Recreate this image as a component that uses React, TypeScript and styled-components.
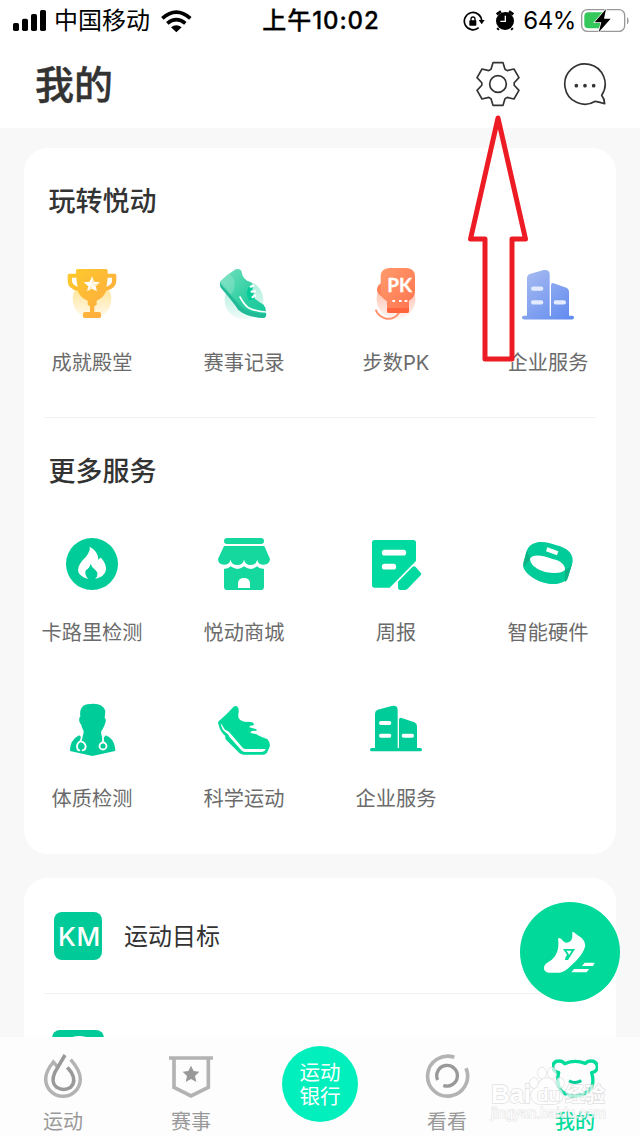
import React from "react";
import styled, { createGlobalStyle } from "styled-components";

const Global = createGlobalStyle`
  * { box-sizing: border-box; }
  body { margin: 0; background: #f8f8f8; }
`;

const Screen = styled.div`
  position: relative;
  display: flex;
  flex-direction: column;
  width: 640px;
  height: 1136px;
  overflow: hidden;
  background: #f8f8f8;
  color: #333;
  font-family: Inter, "Noto Sans CJK SC", sans-serif;
`;

const StatusBar = styled.div`
  flex: none;
  display: grid;
  grid-template-columns: 1fr auto 1fr;
  align-items: center;
  height: 40px;
  padding: 0 11px 0 13px;
  background: #fff;
  color: #000;
  font-size: 24px;
  line-height: 40px;
`;

const StatusGroup = styled.div<{ $end?: boolean }>`
  display: flex;
  align-items: center;
  justify-content: ${(p) => (p.$end ? "flex-end" : "flex-start")};
`;

const Carrier = styled.span`
  margin: 0 11px 0 7px;
  padding-top: 1px;
`;

const Clock = styled.span`
  padding-top: 1px;
  font-weight: 500;
  letter-spacing: 0.9px;
  -webkit-text-stroke: 0.3px #000;
`;

const AlarmSlot = styled.span`
  display: flex;
  margin: 0 -2px 0 10px;
`;

const Percent = styled.span`
  margin: 0 5px 0 10px;
  padding-top: 1px;
  font-size: 24px;
  letter-spacing: -0.4px;
`;

const Header = styled.header`
  flex: none;
  display: flex;
  align-items: center;
  height: 88px;
  padding: 0 31px 0 35px;
  background: #fff;
`;

const PageTitle = styled.h1`
  flex: 1;
  margin: 0;
  padding-top: 2px;
  font-size: 39px;
  line-height: 56px;
  font-weight: 500;
  -webkit-text-stroke: 0.4px #333;
`;

const HeaderActions = styled.div`
  display: flex;
  gap: 42px;
`;

const Content = styled.main`
  flex: 1;
  min-height: 0;
  overflow: hidden;
  display: flex;
  flex-direction: column;
  gap: 24px;
  padding: 20px 24px 0;
`;

const Card = styled.section<{ $height?: number }>`
  flex: none;
  height: ${(p) => (p.$height ? `${p.$height}px` : "auto")};
  background: #fff;
  border-radius: 24px;
`;

const SectionTitle = styled.h2<{ $top: number }>`
  margin: 0;
  padding: ${(p) => p.$top}px 0 40px 24.5px;
  font-size: 27px;
  line-height: 40px;
  font-weight: 500;
`;

const Grid = styled.div<{ $bottom: number }>`
  display: grid;
  grid-template-columns: repeat(4, 152px);
  row-gap: 51px;
  margin: 0 -8px;
  padding-bottom: ${(p) => p.$bottom}px;
`;

const Item = styled.div`
  display: flex;
  flex-direction: column;
  align-items: center;
  gap: 23px;
`;

const ItemLabel = styled.span`
  font-size: 20.2px;
  line-height: 28px;
  font-weight: 400;
  color: #6b6b6b;
  white-space: nowrap;
`;

const Divider = styled.hr`
  height: 1px;
  margin: 0 20px;
  border: 0;
  background: #f3f3f3;
`;

const ListRow = styled.div<{ $inset: number; $shift?: number }>`
  display: flex;
  align-items: center;
  gap: 22px;
  height: 115px;
  padding-left: ${(p) => p.$inset}px;
  padding-top: ${(p) => p.$shift ?? 0}px;
`;

const RowLabel = styled.span`
  padding-top: 2px;
  font-size: 24px;
  line-height: 34px;
`;

const Badge = styled.div<{ $size: number }>`
  display: flex;
  justify-content: center;
  align-items: center;
  width: ${(p) => p.$size}px;
  height: ${(p) => p.$size}px;
  padding: 2px 0 0 3px;
  border-radius: 8px;
  background: #00cb98;
  color: #fff;
  font-size: 26px;
  font-weight: 500;
  letter-spacing: 0.8px;
`;

const TabBar = styled.nav`
  flex: none;
  display: grid;
  grid-template-columns: repeat(5, 128px);
  height: 99px;
  background: #fdfdfd;
`;

const Tab = styled.div<{ $active?: boolean }>`
  display: flex;
  flex-direction: column;
  align-items: center;
  gap: 8px;
  padding: 13px 2px 0 0;
  color: ${(p) => (p.$active ? "#00dc9c" : "#999")};
  font-size: 20px;
  line-height: 28px;
  font-weight: ${(p) => (p.$active ? 500 : 400)};
`;

const BankButton = styled.div`
  display: flex;
  align-items: center;
  justify-content: center;
  justify-self: center;
  width: 76px;
  height: 76px;
  margin-top: 9px;
  padding-top: 1px;
  border-radius: 50%;
  background: #00efbc;
  color: #fff;
  font-size: 20.5px;
  line-height: 24px;
  text-align: center;
`;

const FloatButton = styled.div`
  position: absolute;
  left: 520px;
  top: 902px;
  width: 100px;
  height: 100px;
  border-radius: 50%;
  background: #00d999;
`;

const Pointer = styled.svg`
  position: absolute;
  left: 460px;
  top: 110px;
`;

const Watermark = styled.svg`
  position: absolute;
  left: 486px;
  top: 1058px;
`;

/* Icons are drawn on a grid of three units per pixel. */
const Glyph = ({ x, y, w = 192, h = 192, children }: { x: number; y: number; w?: number; h?: number; children: React.ReactNode }) => (
  <svg width={w / 3} height={h / 3} viewBox={`${x} ${y} ${w} ${h}`} fill="none" display="block">
    {children}
  </svg>
);

const Trophy = () => (
  <Glyph x={60} y={36}>
    <defs>
      <linearGradient id="gold" x1="0" y1="0" x2="1" y2="1"><stop offset="0" stopColor="#fdcb2b" /><stop offset="1" stopColor="#ffa643" /></linearGradient>
      <linearGradient id="goldHalo" x1="0" y1="0" x2="0" y2="1"><stop offset="0" stopColor="#ffdf80" /><stop offset="1" stopColor="#fffaf0" /></linearGradient>
    </defs>
    <circle cx="156" cy="148" r="58" fill="url(#goldHalo)" />
    <path d="M95 82h16l8 30q-24-2-24-20zM216 82h-16l-8 30q24-2 24-20z" fill="#fff" />
    <path fillRule="evenodd" d="M113 57h85q5 0 5 5v9h21q5 0 5 5v16q0 23-30 30-8 20-29 30v12l-7 5v17h14q6 0 6 6v7q0 5-5 5h-45q-4 0-4-5v-7q0-6 6-6h15v-17l-7-5v-12q-23-10-30-30-30-5-30-30V76q0-5 5-5h20v-9q0-5 5-5zM96 83v10q0 11 17 17-3-12-4-27zm107 0q-1 15-4 27 17-6 17-17V83z" fill="url(#gold)" />
    <path d="m156 79 7 16 17 2-13 12 4 15-15-8-15 8 4-15-14-12 18-2z" fill="#fff" />
    <path d="m156 79 7 16-7 10zm24 18-13 12-11-4zm-24 8v11l-15 8z" fill="#ffdc80" opacity=".5" />
  </Glyph>
);

const RaceShoe = () => (
  <Glyph x={516} y={36}>
    <defs>
      <linearGradient id="mint" x1="0" y1="0" x2="1" y2="1"><stop offset="0" stopColor="#77e0c0" /><stop offset=".55" stopColor="#30cfa2" /><stop offset="1" stopColor="#12c79a" /></linearGradient>
      <linearGradient id="mintHalo" x1="0" y1="0" x2="0" y2="1"><stop offset="0" stopColor="#a8edda" /><stop offset="1" stopColor="#effbf8" /></linearGradient>
    </defs>
    <circle cx="612" cy="150" r="58" fill="url(#mintHalo)" />
    <path d="M541 94q22-22 46-36 12-4 17 4 3 27 27 34l8 8-6 12 10 12-6 12q20 17 34 24 10 12 7 35-3 5-10 5-38-4-60-20-8-3-13-12-24-33-51-64-7-7-3-14z" fill="url(#mint)" />
    <path d="M567 71q19 14 17 35-1 19-12 27l-31-39z" fill="#9ae8d0" opacity=".4" />
    <path d="M541 99q2 5 6 9 33 36 53 59 15 20 78 27 0 7-5 9-49 1-78-23-13-21-52-66-5-6-2-15z" fill="#22b997" />
    <path d="M600 141q13 24 25 32 24 12 54 13" stroke="#fff" strokeWidth="5" strokeLinecap="round" />
    <path d="M631 103q-18 23-5 47h15l4-7-9-14 3-20z" fill="#00cc99" />
    <path d="m632 110 8-3m-5 18 10-1m-7 17 7-4" stroke="#fff" strokeWidth="7" strokeLinecap="round" />
  </Glyph>
);

const BoxingGlove = () => (
  <Glyph x={42} y={36}>
    <defs>
      <linearGradient id="coral" x1="0" y1="0" x2="1" y2="1"><stop offset="0" stopColor="#ff9b6a" /><stop offset="1" stopColor="#ff7250" /></linearGradient>
      <linearGradient id="coralHalo" x1="0" y1="0" x2="0" y2="1"><stop offset="0" stopColor="#ffae96" /><stop offset="1" stopColor="#fff5f2" /></linearGradient>
    </defs>
    <circle cx="138" cy="148" r="58" fill="url(#coralHalo)" />
    <path d="M78 181q7 18 31 25 25 3 38-18" stroke="#ff936f" strokeWidth="6" strokeLinecap="round" />
    <path d="M94 100q-11 5-13 18-1 7 5 14l27 24 12-12V98z" fill="#ff8155" />
    <path d="M117 54h53q25 2 25 25v46q-1 18-18 27v31q0 6-6 6h-54q-6 0-6-6v-30q-19-10-19-32V79q0-23 25-25z" fill="url(#coral)" />
    <path d="M111 174h66v9q0 6-6 6h-54q-6 0-6-6z" fill="#ff653d" />
    <path d="M127 153h8m12 0h8m9 0h8" stroke="#fff" strokeWidth="6" />
    <text x="112" y="125" fontFamily="Lato, sans-serif" fontWeight="700" fontSize="56" textLength="74" lengthAdjust="spacingAndGlyphs" fill="#fff" stroke="#fff" strokeWidth="1">PK</text>
  </Glyph>
);

const Buildings = ({ blue }: { blue?: boolean }) => {
  const fill = blue ? "url(#sky)" : "#00cc99";
  const pane = blue ? "#e2ebff" : "#fff";
  return (
    <Glyph x={72} y={blue ? 36 : 24}>
      <defs>
        <linearGradient id="sky" gradientUnits="userSpaceOnUse" x1="105" y1="50" x2="220" y2="190"><stop offset="0" stopColor="#a6baf0" /><stop offset="1" stopColor="#638cf0" /></linearGradient>
      </defs>
      <g transform={blue ? "translate(0 8) scale(1 1.088)" : undefined}>
        <path d="M95 174h10V71q0-9 8-12l42-11q18-3 18 12v114h4V90q0-8 8-6l38 13q8 3 8 12v65h10q5 0 5 5t-5 5H95q-5 0-5-5t5-5z" fill={fill} />
        <path d="M123 99h25m-25 38h25m43 0h25" stroke={pane} strokeWidth="12" strokeLinecap="round" />
      </g>
    </Glyph>
  );
};

const Calories = () => (
  <Glyph x={60} y={36}>
    <circle cx="156" cy="132" r="78" fill="#00cc99" />
    <path d="M149 80q3 12-11 30-25 24-24 41 1 18 31 26-14-15-7-27 11-6 14-19 3 12 14 19 14 12-1 27 29-7 33-27 2-18-15-37-5 1-8 7 1-26-26-40z" fill="#fff" />
  </Glyph>
);

const Shop = () => (
  <Glyph x={516} y={36}>
    <g fill="#15d89f">
      <rect x="552" y="54" width="120" height="18" rx="9" />
      <path d="M552 78h121l17 39q-1 17-19 17-17 0-19-15-4 16-20 16t-20-16q-3 16-20 16-18 0-20-16-4 15-20 15-18 0-18-17z" />
      <path fillRule="evenodd" d="M552 146q11 2 20-7 21 16 40 0 20 16 39 0 9 9 21 7v54q0 10-10 10H562q-10 0-10-10zm42 58h36v-14q-1-16-18-16t-18 16z" />
    </g>
  </Glyph>
);

const Report = () => (
  <Glyph x={42} y={36}>
    <path d="M74 60h116q8 0 8 8v55l-79 80H74q-8 0-8-8V68q0-8 8-8z" fill="#00d9a0" />
    <path d="m187 141q5-5 10 0l15 17q4 4 0 8l-39 40q-4 4-9 4h-13q-7 0-7-7v-18z" fill="#00d9a0" />
    <path d="M104 98h56m-56 42h26" stroke="#fff" strokeWidth="17" strokeLinecap="round" />
  </Glyph>
);

const Band = () => (
  <Glyph x={498} y={36}>
    <path fillRule="evenodd" d="M530 93C540 66 570 62 600 70l30 9c30 10 42 30 37 51l-11 35c-6 23-31 30-61 26-35-5-65-26-74-46-3-7-1-15 0-19zM540 116c2 40 88 54 105 34 2-14-14-29-37-33-24-8-58-18-68-1z" fill="#00cc99" />
    <path d="m530 93-9 33q-1 7 0 15l19-22q0-12-10-26zM667 130q-7 17-22 19v37q8-5 11-21z" fill="#09b185" />
    <path d="m592 82 33 12-4 12-33-12z" fill="#fff" />
  </Glyph>
);

const Doctor = () => (
  <Glyph x={60} y={24}>
    <path d="M151 42q37-4 45 21l-2 20q5 3 3 12l-4 12q-5 11-10 18l2 13q5 10 12-2 26 9 29 42l-1 5-68 15-67-15q-1-32 27-47 13 13 14-13-5-8-8-20-7-7-5-20l3-3q-5-38 30-38z" fill="#00cc99" />
    <path d="M125 133q1 13-3 20-11 6-11 17 1 11 7 11m4-27q14 3 15 16-1 10-9 11M189 128v27" stroke="#fff" strokeWidth="5.5" strokeLinecap="round" />
    <circle cx="189" cy="168" r="10.5" stroke="#fff" strokeWidth="5.5" />
  </Glyph>
);

const SportShoe = () => (
  <Glyph x={516} y={24}>
    <path d="M536 94q24-21 45-44 7-5 12 1 5 8 2 22-3 17 18 22l20 1q11 2 8 10l-11 1-2 5 19 5q4 1 3 5l-15 1-4 6 17 3 9 5q15 7 25 10 10 12 7 23l-8 18q-5 6-12 6h-59q-7-1-12-5l-40-40q-3-5-2-11-16-14-20-33-3-7 0-11z" fill="#00d999" />
    <path d="m542 99 13 20q12 4 15 10l38 44q4 4 9 4h61q-5 9-12 9h-51q-6 0-11-5l-36-41q-2-8-10-12-14-9-16-29z" fill="#fff" />
  </Glyph>
);

const TOOTH = [[-21, -44], [-15, -64], [15, -64], [21, -44]];
const gearPoints = [0, 60, 120, 180, 240, 300]
  .flatMap((deg) => {
    const a = (deg * Math.PI) / 180;
    return TOOTH.map(([x, y]) => `${(534 + x * Math.cos(a) - y * Math.sin(a)).toFixed(1)},${(252 + x * Math.sin(a) + y * Math.cos(a)).toFixed(1)}`);
  })
  .join(" ");

const Gear = () => (
  <Glyph x={465} y={183} w={138} h={138}>
    <g stroke="#333" strokeWidth="5" strokeLinejoin="round">
      <polygon points={gearPoints} />
      <circle cx="534" cy="252" r="25" />
    </g>
  </Glyph>
);

const Chat = () => (
  <Glyph x={729} y={183} w={138} h={138}>
    <path d="M845 286A60.5 60.5 0 1 0 826 304q14 2 28 7-1-16-9-25z" stroke="#333" strokeWidth="5" strokeLinejoin="round" />
    <g fill="#333"><circle cx="769" cy="257" r="5.5" /><circle cx="795" cy="257" r="5.5" /><circle cx="821" cy="257" r="5.5" /></g>
  </Glyph>
);

const Signal = () => (
  <Glyph x={39} y={24} w={102} h={72}>
    <g fill="#000"><rect x="39" y="66" width="18" height="24" rx="5" /><rect x="66" y="53" width="18" height="37" rx="5" /><rect x="93" y="39" width="18" height="51" rx="5" /><rect x="120" y="27" width="18" height="63" rx="5" /></g>
  </Glyph>
);

const Wifi = () => (
  <Glyph x={484} y={24} w={93} h={72}>
    <path d="M488 52q42-37 84 0M503 67q27-22 54 0" stroke="#000" strokeWidth="11" />
    <path d="M514 79q16-12 32 0l-16 15z" fill="#000" />
  </Glyph>
);

const RotationLock = () => (
  <Glyph x={430} y={27} w={66} h={66}>
    <path d="M477 80a26 26 0 1 1 9-20" stroke="#000" strokeWidth="5" />
    <path d="M477 57h18l-9 13z" fill="#000" />
    <rect x="449" y="58" width="21" height="16" rx="2" fill="#000" />
    <path d="M454 60v-6q0-6 6-6t6 6v6" stroke="#000" strokeWidth="4" />
  </Glyph>
);

const Alarm = () => (
  <Glyph x={525} y={27} w={60} h={63}>
    <circle cx="555" cy="60" r="27" fill="#000" />
    <path d="m530 40 13-9m24 0 13 9M536 82l-4 4m42-4 4 4" stroke="#000" strokeWidth="8" />
    <path d="M556 44v17h-15" stroke="#fff" strokeWidth="4" />
  </Glyph>
);

const Battery = () => (
  <Glyph x={783} y={21} w={144} h={75}>
    <rect x="785" y="26" width="129" height="65" rx="17" stroke="#999" strokeWidth="4" />
    <path d="M805 34h46l-13 48h-33q-12 0-12-12V46q0-12 12-12z" fill="#34c759" />
    <path d="M921 48q5 4 5 11t-5 11z" fill="#999" />
    <path d="m858 24-34 40h20l-8 30 36-41h-20z" fill="#000" stroke="#fff" strokeWidth="4" paintOrder="stroke" />
  </Glyph>
);

const FlameTab = () => (
  <Glyph x={120} y={60} w={138} h={150}>
    <g strokeWidth="10.5">
      <path d="M172 110 160 96q-23 28-23 51a52 52 0 0 0 104 0q0-25-29-58" stroke="#b3b3b3" />
      <path d="m195 75-30 51q-14 31 5 46 21 13 42 0 18-18 2-45l-12-15" stroke="#999" />
    </g>
  </Glyph>
);

const ShieldTab = () => (
  <Glyph x={504} y={60} w={138} h={150}>
    <path d="M507 84h132M522 86v86l51 26 52-26V86" stroke="#b3b3b3" strokeWidth="11" />
    <path d="m573 107 8 16 17 2-13 13 4 18-16-9-16 9 4-18-13-13 17-2z" fill="#999" />
  </Glyph>
);

const SwirlTab = () => (
  <Glyph x={312} y={60} w={138} h={150}>
    <path d="M403 82A60 60 0 1 0 438 115" stroke="#b3b3b3" strokeWidth="11" />
    <path d="M353 150a31 31 0 1 1 17 16" stroke="#999" strokeWidth="10" />
  </Glyph>
);

const BearTab = () => (
  <Glyph x={696} y={60} w={138} h={150}>
    <path d="M716 128q-18-5-18-17 1-17 18-18 11-1 18 8 30-13 62-1 7-8 17-7 18 1 19 18 0 13-17 17 10 34-7 53-39 32-81 5-20-22-11-58z" stroke="#00dc9c" strokeWidth="10" strokeLinejoin="round" />
    <path d="M747 152q18 11 37 0" stroke="#00cc99" strokeWidth="9" />
  </Glyph>
);

const FloatShoe = () => (
  <Glyph x={120} y={66} w={300} h={300}>
    <path fillRule="evenodd" d="M277 155q6 1 10 6l18 13q13 13 10 27-7 26-43 57-20 20-34 20h-31q-15-1-15-13 0-12 10-17 31-16 33-49v-16q-3-8 3-9 7 1 11 9 8 8 16 4 12-4 12-18zm-28 52 11 16q2 5-3 7l-2 10h9l21-33zm10 5h16l-8 13q-2-7-8-13z" fill="#fff" />
    <path d="m314 248h30l-5 10h-33zm-32 19h45l-7 10h-46z" fill="#fff" />
  </Glyph>
);

const play = [
  { label: "成就殿堂", icon: <Trophy /> },
  { label: "赛事记录", icon: <RaceShoe /> },
  { label: "步数PK", icon: <BoxingGlove /> },
  { label: "企业服务", icon: <Buildings blue /> },
];

const services = [
  { label: "卡路里检测", icon: <Calories /> },
  { label: "悦动商城", icon: <Shop /> },
  { label: "周报", icon: <Report /> },
  { label: "智能硬件", icon: <Band /> },
  { label: "体质检测", icon: <Doctor /> },
  { label: "科学运动", icon: <SportShoe /> },
  { label: "企业服务", icon: <Buildings /> },
];

const Services = ({ items, bottom }: { items: typeof play; bottom: number }) => (
  <Grid $bottom={bottom}>
    {items.map((item) => (
      <Item key={item.label}>
        {item.icon}
        <ItemLabel>{item.label}</ItemLabel>
      </Item>
    ))}
  </Grid>
);

export default function App() {
  return (
    <Screen>
      <Global />
      <StatusBar>
        <StatusGroup>
          <Signal />
          <Carrier>中国移动</Carrier>
          <Wifi />
        </StatusGroup>
        <Clock>上午10:02</Clock>
        <StatusGroup $end>
          <RotationLock />
          <AlarmSlot><Alarm /></AlarmSlot>
          <Percent>64%</Percent>
          <Battery />
        </StatusGroup>
      </StatusBar>
      <Header>
        <PageTitle>我的</PageTitle>
        <HeaderActions>
          <Gear />
          <Chat />
        </HeaderActions>
      </Header>
      <Content>
        <Card>
          <SectionTitle $top={34}>玩转悦动</SectionTitle>
          <Services items={play} bottom={40} />
          <Divider />
          <SectionTitle $top={34}>更多服务</SectionTitle>
          <Services items={services} bottom={41} />
        </Card>
        <Card $height={260}>
          <ListRow $inset={30}>
            <Badge $size={48}>KM</Badge>
            <RowLabel>运动目标</RowLabel>
          </ListRow>
          <Divider />
          <ListRow $inset={28} $shift={9}>
            <Badge $size={52}>
              <Glyph x={0} y={0} w={147} h={150}>
                <ellipse cx="73" cy="72" rx="66" ry="60" fill="#fff" />
              </Glyph>
            </Badge>
          </ListRow>
        </Card>
      </Content>
      <TabBar>
        <Tab><FlameTab />运动</Tab>
        <Tab><ShieldTab />赛事</Tab>
        <BankButton>运动<br />银行</BankButton>
        <Tab><SwirlTab />看看</Tab>
        <Tab $active><BearTab />我的</Tab>
      </TabBar>
      <FloatButton><FloatShoe /></FloatButton>
      <Pointer width="76" height="256" viewBox="460 110 76 256" fill="none">
        <path d="M498 118 470.5 239H485v120h27V239h13.5z" stroke="#ed1c24" strokeWidth="5" strokeLinejoin="round" />
      </Pointer>
      <Watermark width="124" height="66" viewBox="486 1058 124 66" fontFamily="Liberation Sans, Noto Sans CJK SC, sans-serif">
        <g fill="#fff" stroke="#d4d4d4" strokeWidth="1.4" paintOrder="stroke" opacity=".7">
          <text x="491" y="1103" fontSize="26" fontWeight="700" textLength="40">Bai</text>
          <path d="M547 1078c-7 0-8 7-13 11-6 6-2 15 6 15h14c8 0 12-9 6-15-5-4-6-11-13-11z" />
          <ellipse cx="534" cy="1083" rx="4" ry="5" />
          <ellipse cx="542" cy="1073" rx="4" ry="5.5" />
          <ellipse cx="552" cy="1073" rx="4" ry="5.5" />
          <ellipse cx="560" cy="1083" rx="4" ry="5" />
          <text x="537" y="1101" fontSize="19" fontWeight="700">du</text>
          <text x="565" y="1102" fontSize="20" fontWeight="700">经验</text>
          <text x="491" y="1118" fontSize="14" strokeWidth="1" textLength="115">jingyan.baidu.com</text>
        </g>
      </Watermark>
    </Screen>
  );
}
